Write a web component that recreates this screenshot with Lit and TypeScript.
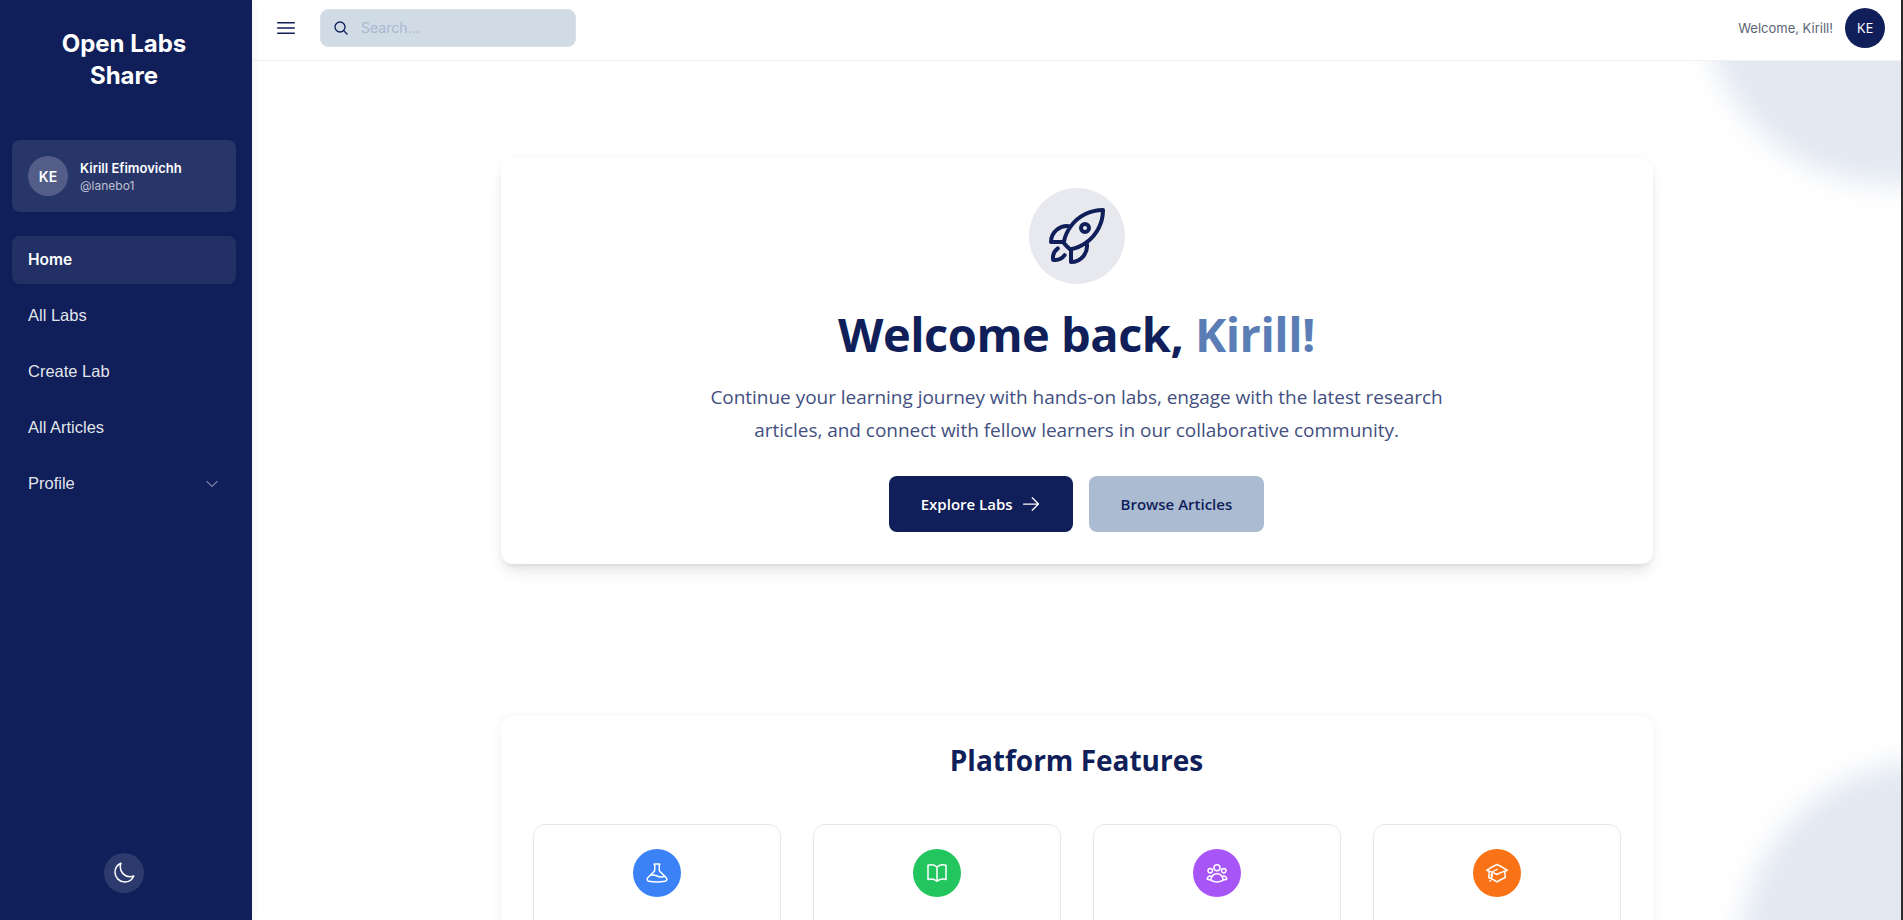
import { LitElement, html, css, svg } from "lit";
import { customElement } from "lit/decorators.js";

const icon = (d: string, cls: string, sw = 1.5) => html`<svg class=${cls} viewBox="0 0 24 24" fill="none" stroke="currentColor" stroke-width=${sw} stroke-linecap="round" stroke-linejoin="round">${svg`<path d=${d}></path>`}</svg>`;

const I = {
  bars: "M3.75 6.75h16.5M3.75 12h16.5m-16.5 5.25h16.5",
  search: "m21 21-5.197-5.197m0 0A7.5 7.5 0 1 0 5.196 5.196a7.5 7.5 0 0 0 10.607 10.607Z",
  chevron: "m19.5 8.25-7.5 7.5-7.5-7.5",
  moon: "M21.752 15.002A9.72 9.72 0 0 1 18 15.75c-5.385 0-9.75-4.365-9.75-9.75 0-1.33.266-2.597.748-3.752A9.753 9.753 0 0 0 3 11.25C3 16.635 7.365 21 12.75 21a9.753 9.753 0 0 0 9.002-5.998Z",
  rocket: "M15.59 14.37a6 6 0 0 1-5.84 7.38v-4.8m5.84-2.58a14.98 14.98 0 0 0 6.16-12.12A14.98 14.98 0 0 0 9.631 8.41m5.96 5.96a14.926 14.926 0 0 1-5.841 2.58m-.119-8.54a6 6 0 0 0-7.381 5.84h4.8m2.581-5.84a14.927 14.927 0 0 0-2.58 5.84m2.699 2.7c-.103.021-.207.041-.311.06a15.09 15.09 0 0 1-2.448-2.448 14.9 14.9 0 0 1 .06-.312m-2.24 2.39a4.493 4.493 0 0 0-1.757 4.306 4.493 4.493 0 0 0 4.306-1.758M16.5 9a1.5 1.5 0 1 1-3 0 1.5 1.5 0 0 1 3 0Z",
  arrow: "M13.5 4.5 21 12m0 0-7.5 7.5M21 12H3",
  beaker: "M9.75 3.104v5.714a2.25 2.25 0 0 1-.659 1.591L5 14.5M9.75 3.104c-.251.023-.501.05-.75.082m.75-.082a24.301 24.301 0 0 1 4.5 0m0 0v5.714c0 .597.237 1.17.659 1.591L19.8 15.3M14.25 3.104c.251.023.501.05.75.082M19.8 15.3l-1.57.393A9.065 9.065 0 0 1 12 15a9.065 9.065 0 0 0-6.23-.693L5 14.5m14.8.8 1.402 1.402c1.232 1.232.65 3.318-1.067 3.611A48.309 48.309 0 0 1 12 21c-2.773 0-5.491-.235-8.135-.687-1.718-.293-2.3-2.379-1.067-3.61L5 14.5",
  book: "M12 6.042A8.967 8.967 0 0 0 6 3.75c-1.052 0-2.062.18-3 .512v14.25A8.987 8.987 0 0 1 6 18c2.305 0 4.408.867 6 2.292m0-14.25a8.966 8.966 0 0 1 6-2.292c1.052 0 2.062.18 3 .512v14.25A8.987 8.987 0 0 0 18 18a8.967 8.967 0 0 0-6 2.292m0-14.25v14.25",
  users: "M18 18.72a9.094 9.094 0 0 0 3.741-.479 3 3 0 0 0-4.682-2.72m.94 3.198.001.031c0 .225-.012.447-.037.666A11.944 11.944 0 0 1 12 21c-2.17 0-4.207-.576-5.963-1.584A6.062 6.062 0 0 1 6 18.719m12 0a5.971 5.971 0 0 0-.941-3.197m0 0A5.995 5.995 0 0 0 12 12.75a5.995 5.995 0 0 0-5.058 2.772m0 0a3 3 0 0 0-4.681 2.72 8.986 8.986 0 0 0 3.74.477m.94-3.197a5.971 5.971 0 0 0-.94 3.197M15 6.75a3 3 0 1 1-6 0 3 3 0 0 1 6 0Zm6 3a2.25 2.25 0 1 1-4.5 0 2.25 2.25 0 0 1 4.5 0Zm-13.5 0a2.25 2.25 0 1 1-4.5 0 2.25 2.25 0 0 1 4.5 0Z",
  cap: "M4.26 10.147a60.438 60.438 0 0 0-.491 6.347A48.62 48.62 0 0 1 12 20.904a48.62 48.62 0 0 1 8.232-4.41 60.46 60.46 0 0 0-.491-6.347m-15.482 0a50.636 50.636 0 0 0-2.658-.813A59.906 59.906 0 0 1 12 3.493a59.903 59.903 0 0 1 10.399 5.84c-.896.248-1.783.52-2.658.814m-15.482 0A50.717 50.717 0 0 1 12 13.489a50.702 50.702 0 0 1 7.74-3.342M6.75 15a.75.75 0 1 0 0-1.5.75.75 0 0 0 0 1.5Zm0 0v-3.675A55.378 55.378 0 0 1 12 8.443m-7.007 11.55A5.981 5.981 0 0 0 6.75 15.75v-1.5",
};

@customElement("app-root")
export class AppRoot extends LitElement {
  static styles = css`
    :host { display: block; height: 920px; overflow: hidden; font-family: "Open Sans", "Noto Sans", sans-serif; background: #2b2b2b; }
    * { box-sizing: border-box; }
    .shell { display: flex; height: 920px; width: 1901px; }
    .side { width: 252px; flex: none; background: #101f59; color: #fff; display: flex; flex-direction: column; padding: 28px 16px 27px 12px; font-family: Inter, "Liberation Sans", sans-serif; box-shadow: 2px 0 8px rgba(0,0,0,.06); position: relative; z-index: 2; }
    .logo { margin: 0; text-align: center; font-size: 24px; line-height: 32px; font-weight: 700; color: #fff; padding: 0 32px; }
    .profile { margin-top: 48px; height: 72px; border-radius: 8px; background: rgba(255,255,255,.1); display: flex; align-items: center; gap: 12px; padding: 0 16px; }
    .pav { width: 40px; height: 40px; border-radius: 50%; background: rgba(255,255,255,.2); display: flex; align-items: center; justify-content: center; font-size: 14px; font-weight: 600; }
    .pname { font-size: 13px; line-height: 20px; font-weight: 600; }
    .phandle { font-size: 12px; line-height: 16px; color: rgba(255,255,255,.7); }
    .nav { margin-top: 24px; display: flex; flex-direction: column; gap: 8px; }
    .item { height: 48px; padding: 0 16px 1px; display: flex; align-items: center; justify-content: space-between; border-radius: 8px; font-family: "Liberation Sans", Arial, sans-serif; font-size: 16.5px; color: rgba(255,255,255,.9); }
    .item.on { background: rgba(255,255,255,.08); color: #fff; font-weight: 600; font-family: Inter, sans-serif; font-size: 15.5px; }
    .chev { width: 16px; height: 16px; color: rgba(255,255,255,.75); }
    .spacer { flex: 1; }
    .theme { align-self: center; width: 40px; height: 40px; border-radius: 50%; background: rgba(255,255,255,.12); display: flex; align-items: center; justify-content: center; color: #fff; }
    .moon { width: 24px; height: 24px; }
    .main { flex: 1; min-width: 0; background: #fff; position: relative; overflow: hidden; display: flex; flex-direction: column; }
    .blob { position: absolute; width: 384px; height: 384px; border-radius: 50%; background: #e3e8f1; filter: blur(14px); }
    .b1 { left: 1450px; top: -199px; }
    .b2 { left: 1488px; top: 760px; }
    .top { position: relative; z-index: 1; height: 61px; flex: none; background: #fff; border-bottom: 1px solid #f1f2f5; display: flex; align-items: center; padding: 0 16px 5px 22px; }
    .bars { width: 24px; height: 24px; color: #101f59; }
    .search { margin-left: 22px; width: 256px; height: 38px; border-radius: 8px; border: 1px solid #dbe2ec; background: #d1dbe6; display: flex; align-items: center; padding-left: 12px; gap: 12px; color: #101f59; font-size: 14px; }
    .sicon { width: 16px; height: 16px; }
    .ph { color: #a9b8cf; font-family: Inter, sans-serif; font-size: 14px; }
    .welcome { margin-left: auto; font-size: 13px; color: #5b6474; font-family: Inter, sans-serif; }
    .uav { margin-left: 12px; width: 40px; height: 40px; border-radius: 50%; background: #101f59; color: #fff; display: flex; align-items: center; justify-content: center; font-size: 14px; }
    .content { position: relative; z-index: 1; width: 1152px; margin: 0 auto; padding-top: 97px; }
    .card { background: #fff; border-radius: 12px; box-shadow: 0 10px 15px -3px rgba(0,0,0,.1), 0 4px 6px -4px rgba(0,0,0,.1), 0 0 10px rgba(0,0,0,.03); }
    .hero { height: 406px; padding-top: 30px; display: flex; flex-direction: column; align-items: center; }
    .rocket-wrap { width: 96px; height: 96px; border-radius: 50%; background: #e7e9ef; display: flex; align-items: center; justify-content: center; color: #101f59; }
    .rocket { width: 64px; height: 64px; }
    h1 { margin: 20px 0 0; font-size: 47px; letter-spacing: -0.5px; line-height: 60px; font-weight: 700; color: #101f59; }
    h1 span { color: #5a7db5; }
    .lead { margin: 17px 0 0; width: 768px; text-align: center; font-size: 19px; letter-spacing: -0.03px; line-height: 32.5px; color: #434f80; }
    .btns { display: flex; gap: 16px; margin-top: 30px; }
    .btn { height: 56px; border-radius: 8px; display: flex; align-items: center; gap: 8px; padding: 0 32px; font-size: 15px; font-weight: 600; }
    .b-pri { background: #101f59; color: #fff; }
    .b-sec { background: #abbbd2; color: #101f59; }
    .arrow { width: 20px; height: 20px; }
    .features { margin-top: 152px; padding: 22px 32px 32px; height: 400px; box-shadow: 0 1px 12px rgba(0,0,0,.06); }
    h2 { margin: 0; text-align: center; font-size: 28px; line-height: 44px; font-weight: 700; color: #101f59; }
    .grid { margin-top: 42px; display: grid; grid-template-columns: repeat(4, 1fr); gap: 32px; }
    .f { height: 220px; border: 1px solid #e5e7eb; border-radius: 12px; padding-top: 24px; display: flex; justify-content: center; }
    .fi { width: 48px; height: 48px; border-radius: 50%; display: flex; align-items: center; justify-content: center; color: #fff; }
    .fsvg { width: 24px; height: 24px; }
  `;

  render() {
    const feats = [["#3b82f6", I.beaker], ["#22c55e", I.book], ["#a855f7", I.users], ["#f97316", I.cap]];
    return html`<div class="shell">
      <aside class="side">
        <h2 class="logo">Open Labs Share</h2>
        <div class="profile">
          <div class="pav">KE</div>
          <div><div class="pname">Kirill Efimovichh</div><div class="phandle">@lanebo1</div></div>
        </div>
        <nav class="nav">
          <div class="item on">Home</div>
          <div class="item">All Labs</div>
          <div class="item">Create Lab</div>
          <div class="item">All Articles</div>
          <div class="item">Profile ${icon(I.chevron, "chev")}</div>
        </nav>
        <div class="spacer"></div>
        <div class="theme">${icon(I.moon, "moon")}</div>
      </aside>
      <main class="main">
        <div class="blob b1"></div>
        <div class="blob b2"></div>
        <header class="top">
          ${icon(I.bars, "bars")}
          <div class="search">${icon(I.search, "sicon", 2)}<span class="ph">Search...</span></div>
          <span class="welcome">Welcome, Kirill!</span>
          <div class="uav">KE</div>
        </header>
        <div class="content">
          <section class="card hero">
            <div class="rocket-wrap">${icon(I.rocket, "rocket", 1.5)}</div>
            <h1>Welcome back, <span>Kirill!</span></h1>
            <p class="lead">Continue your learning journey with hands-on labs, engage with the latest research articles, and connect with fellow learners in our collaborative community.</p>
            <div class="btns">
              <div class="btn b-pri">Explore Labs ${icon(I.arrow, "arrow")}</div>
              <div class="btn b-sec">Browse Articles</div>
            </div>
          </section>
          <section class="card features">
            <h2>Platform Features</h2>
            <div class="grid">
              ${feats.map(([c, d]) => html`<div class="f"><div class="fi" style="background:${c}">${icon(d, "fsvg")}</div></div>`)}
            </div>
          </section>
        </div>
      </main>
    </div>`;
  }
}
